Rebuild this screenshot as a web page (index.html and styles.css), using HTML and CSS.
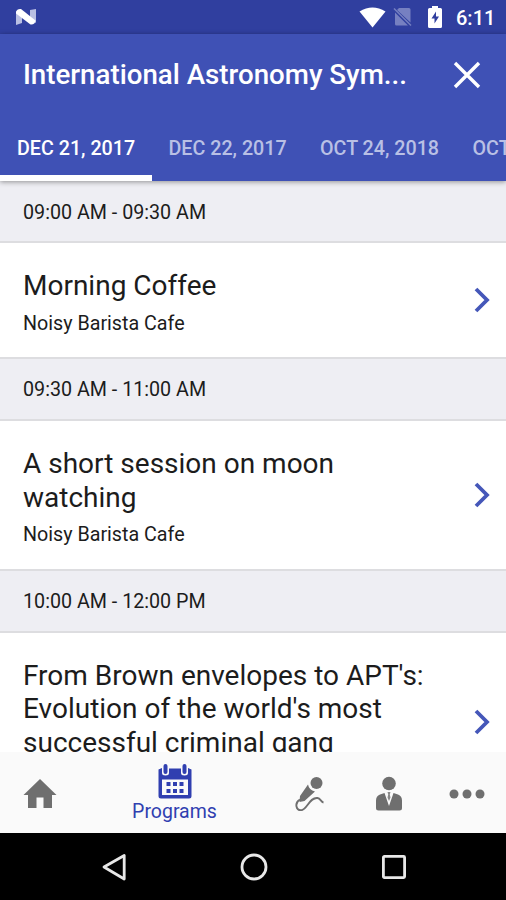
FILE: index.html
```
<!DOCTYPE html>
<html lang="en">
<head>
    <meta charset="UTF-8">
    <meta name="viewport" content="width=device-width, initial-scale=1.0">
    <title>Programs</title>
    <link rel="stylesheet" href="styles.css">
</head>
<body>
    <div class="status-bar">
        <svg class="icon-n" width="22" height="18" viewBox="0 0 22 18">
            <path d="M1 3l6 4v8l-6 2zM15 2l6-1v14l-6-4z" fill="#b9bfe3"/>
            <path d="M1 4Q2 .500 6 1L20.500 12.500Q20 17 15.500 16.500L1 5.500z" fill="#fff"/>
        </svg>
        <div class="status-icons">
            <svg class="icon-wifi" width="27" height="21" viewBox="0 0 27 21">
                <path d="M.500 4.500Q13.500-3.500 26.500 4.500L13.500 20.500z" fill="#fff"/>
            </svg>
            <svg class="icon-sim" width="19" height="20" viewBox="0 0 19 20">
                <path d="M6 1h10q1.500 0 1.500 1.500v13L4 3zM2 5.500L15 18.500H3.500Q2 18.500 2 17z" fill="#7680c1"/>
                <path d="M1 1.500l17 17" stroke="#7680c1" stroke-width="1.500"/>
            </svg>
            <svg class="icon-battery" width="14" height="22" viewBox="0 0 14 22">
                <path d="M4 0h6v2h2.500Q14 2 14 3.500v17q0 1.500-1.500 1.500h-11Q0 22 0 20.500v-17Q0 2 1.500 2H4z" fill="#fff"/>
                <path d="M8 5.500L3.500 12.500h3v5l4.500-7H8z" fill="#303f9f"/>
            </svg>
            <span class="clock">6:11</span>
        </div>
    </div>

    <header class="header">
        <div class="title-row">
            <h1>International Astronomy Sym...</h1>
            <svg class="icon-close" width="28" height="28" viewBox="0 0 28 28">
                <path d="M2 2l24 24M26 2L2 26" stroke="#fff" stroke-width="3.400"/>
            </svg>
        </div>
        <div class="tabs">
            <div class="tab active">DEC 21, 2017</div>
            <div class="tab">DEC 22, 2017</div>
            <div class="tab">OCT 24, 2018</div>
            <div class="tab">OCT</div>
        </div>
    </header>

    <main class="programs">
        <div class="time">09:00 AM - 09:30 AM</div>
        <div class="program">
            <div class="info">
                <h2>Morning Coffee</h2>
                <p>Noisy Barista Cafe</p>
            </div>
            <svg class="chevron" width="16" height="26" viewBox="0 0 16 26">
                <path d="M2 2l11 11L2 24" fill="none" stroke="#4557b9" stroke-width="3.800"/>
            </svg>
        </div>
        <div class="time">09:30 AM - 11:00 AM</div>
        <div class="program">
            <div class="info">
                <h2>A short session on moon<br>watching</h2>
                <p>Noisy Barista Cafe</p>
            </div>
            <svg class="chevron" width="16" height="26" viewBox="0 0 16 26">
                <path d="M2 2l11 11L2 24" fill="none" stroke="#4557b9" stroke-width="3.800"/>
            </svg>
        </div>
        <div class="time">10:00 AM - 12:00 PM</div>
        <div class="program tall">
            <div class="info">
                <h2>From Brown envelopes to APT's:<br>Evolution of the world's most<br>successful criminal gang</h2>
            </div>
            <svg class="chevron" width="16" height="26" viewBox="0 0 16 26">
                <path d="M2 2l11 11L2 24" fill="none" stroke="#4557b9" stroke-width="3.800"/>
            </svg>
        </div>
    </main>

    <nav class="bottom-nav">
        <div class="nav-item home">
            <svg width="34" height="30" viewBox="0 0 34 30">
                <path d="M17 0L33.500 16H29v13H20.500V18.500h-7V29H5V16H.500z" fill="#6f6f6f"/>
            </svg>
        </div>
        <div class="nav-item calendar active">
            <svg width="34" height="35" viewBox="0 0 34 35">
                <path d="M.500 5.500L4 4v5q0 2.500 3.500 2.500T11 9V4.500h12V9q0 2.500 3.500 2.500T30 9V4l3.500 1.500V32q0 2.500-2.500 2.500H3Q.500 34.500.500 32z" fill="#303fb0"/>
                <path d="M4 15.500h26V31H4z" fill="#fafafa"/>
                <path d="M7.500 2v6M26.500 2v6" stroke="#303fb0" stroke-width="4" stroke-linecap="round"/>
                <path d="M8.500 18h4v4h-4zM15 18h4v4h-4zM21.500 18h4v4h-4zM8.500 25h4v4h-4zM15 25h4v4h-4zM21.500 25h4v4h-4z" fill="#303fb0"/>
            </svg>
            <span>Programs</span>
        </div>
        <div class="nav-item mic">
            <svg width="30" height="36" viewBox="0 0 30 36">
                <circle cx="21.500" cy="7" r="6" fill="#6f6f6f"/>
                <path d="M13 8.500q1 5.500 7 7L9.500 25 4.500 26 5 20z" fill="#6f6f6f"/>
                <path d="M5 23.500C-1 27 1 35 7 34c5-1 8-13 15.500-12 3 .5 3.500 4 6 4.500" fill="none" stroke="#6f6f6f" stroke-width="1.900"/>
            </svg>
        </div>
        <div class="nav-item person">
            <svg width="28" height="36" viewBox="0 0 28 36">
                <circle cx="14" cy="7.500" r="6.800" fill="#6f6f6f"/>
                <path d="M9.500 17L14 30l4.500-13 4.500 1.500q4 1.500 4 6V32q0 2.500-2.500 2.500h-21Q1 34.500 1 32v-7.500q0-4.500 4-6z" fill="#6f6f6f"/>
                <path d="M12.500 16h3l-.7 2.500.7 3L14 25l-1.500-3.500.7-3z" fill="#8a8a8a"/>
            </svg>
        </div>
        <div class="nav-item more">
            <svg width="36" height="10" viewBox="0 0 36 10">
                <g fill="#6f6f6f"><circle cx="5" cy="5" r="4.500"/><circle cx="18" cy="5" r="4.500"/><circle cx="31" cy="5" r="4.500"/></g>
            </svg>
        </div>
    </nav>

    <div class="system-nav">
        <svg width="26" height="30" viewBox="0 0 26 30">
            <path d="M23.200 3.500v23.500L3 15z" fill="none" stroke="#e8e8e8" stroke-width="2.800" stroke-linejoin="round"/>
        </svg>
        <svg width="28" height="28" viewBox="0 0 28 28">
            <circle cx="14" cy="14" r="12" fill="none" stroke="#e8e8e8" stroke-width="2.800"/>
        </svg>
        <svg width="26" height="26" viewBox="0 0 26 26">
            <rect x="2.400" y="2.400" width="21.200" height="21.200" rx="1" fill="none" stroke="#e8e8e8" stroke-width="2.800"/>
        </svg>
    </div>
</body>
</html>
```
FILE: styles.css
```
* {
    box-sizing: border-box;
}

body {
    font-family: Roboto, sans-serif;
    background: #fff;
    margin: 0;
    height: 900px;
    display: flex;
    flex-direction: column;
    overflow: hidden;
    color: #1c1c1c;
}

svg {
    display: block;
    flex-shrink: 0;
}

h1, h2, p {
    margin: 0;
}

.status-bar {
    height: 34px;
    flex-shrink: 0;
    display: flex;
    align-items: center;
    justify-content: space-between;
    padding: 0 12px 0 15px;
    background: #303f9f;
}

.status-icons {
    display: flex;
    align-items: center;
}

.icon-sim {
    margin-left: 7px;
}

.icon-battery {
    margin: 0 14px 0 16px;
}

.clock {
    font-size: 20px;
    font-weight: 500;
    line-height: 34px;
    color: #fff;
    width: 38px;
    white-space: nowrap;
    padding-top: 2px;
}

.header {
    height: 147px;
    flex-shrink: 0;
    background: #3f51b5;
    box-shadow: 0 1px 5px rgba(0, 0, 0, 0.4);
    position: relative;
}

.title-row {
    height: 80px;
    display: flex;
    align-items: center;
    justify-content: space-between;
    padding: 1px 25px 0 23px;
}

.title-row h1 {
    font-size: 27.700px;
    font-weight: 500;
    color: #fff;
    white-space: nowrap;
}

.tabs {
    height: 67px;
    display: flex;
}

.tab {
    padding: 1px 0 0 17px;
    width: 151.500px;
    flex-shrink: 0;
    font-size: 19.700px;
    font-weight: 500;
    line-height: 67px;
    color: #b9c0e5;
    white-space: nowrap;
}

.tab:last-child {
    width: auto;
    padding-left: 18px;
}

.tab.active {
    color: #fff;
    border-bottom: 6px solid #fff;
}

.programs {
    flex: 1;
    min-height: 0;
    overflow: hidden;
}

.time {
    height: 64px;
    padding-left: 23px;
    background: #eeeef3;
    border-top: 2px solid #dddde0;
    border-bottom: 2px solid #dddde0;
    font-size: 19.700px;
    line-height: 62px;
}

.time:first-child {
    height: 62px;
    border-top: none;
    line-height: 63px;
}

.program {
    display: flex;
    align-items: center;
    justify-content: space-between;
    padding: 26px 16px 21.500px 23px;
}

.program.tall {
    height: 181px;
    padding-bottom: 25px;
}

.tall .info {
    align-self: flex-start;
}

.chevron {
    margin-bottom: 4px;
}

.program h2 {
    font-size: 28px;
    font-weight: 400;
    line-height: 33.500px;
    white-space: nowrap;
}

.program p {
    font-size: 19.700px;
    line-height: 24px;
    margin-top: 9px;
}

.bottom-nav {
    height: 81px;
    flex-shrink: 0;
    display: flex;
    background: #fafafa;
    color: #303fb0;
}

.nav-item {
    display: flex;
    flex-direction: column;
    align-items: center;
    justify-content: center;
    padding-top: 2px;
}

.home {
    width: 79px;
}

.calendar {
    width: 191px;
}

.calendar span {
    font-size: 19.500px;
    line-height: 22px;
    margin-top: 2px;
}

.mic {
    width: 79px;
}

.person {
    width: 79px;
}

.more {
    width: 78px;
}

.system-nav {
    height: 67px;
    flex-shrink: 0;
    display: flex;
    align-items: center;
    justify-content: space-between;
    padding: 0 99px 0 101px;
    background: #000;
}
```
